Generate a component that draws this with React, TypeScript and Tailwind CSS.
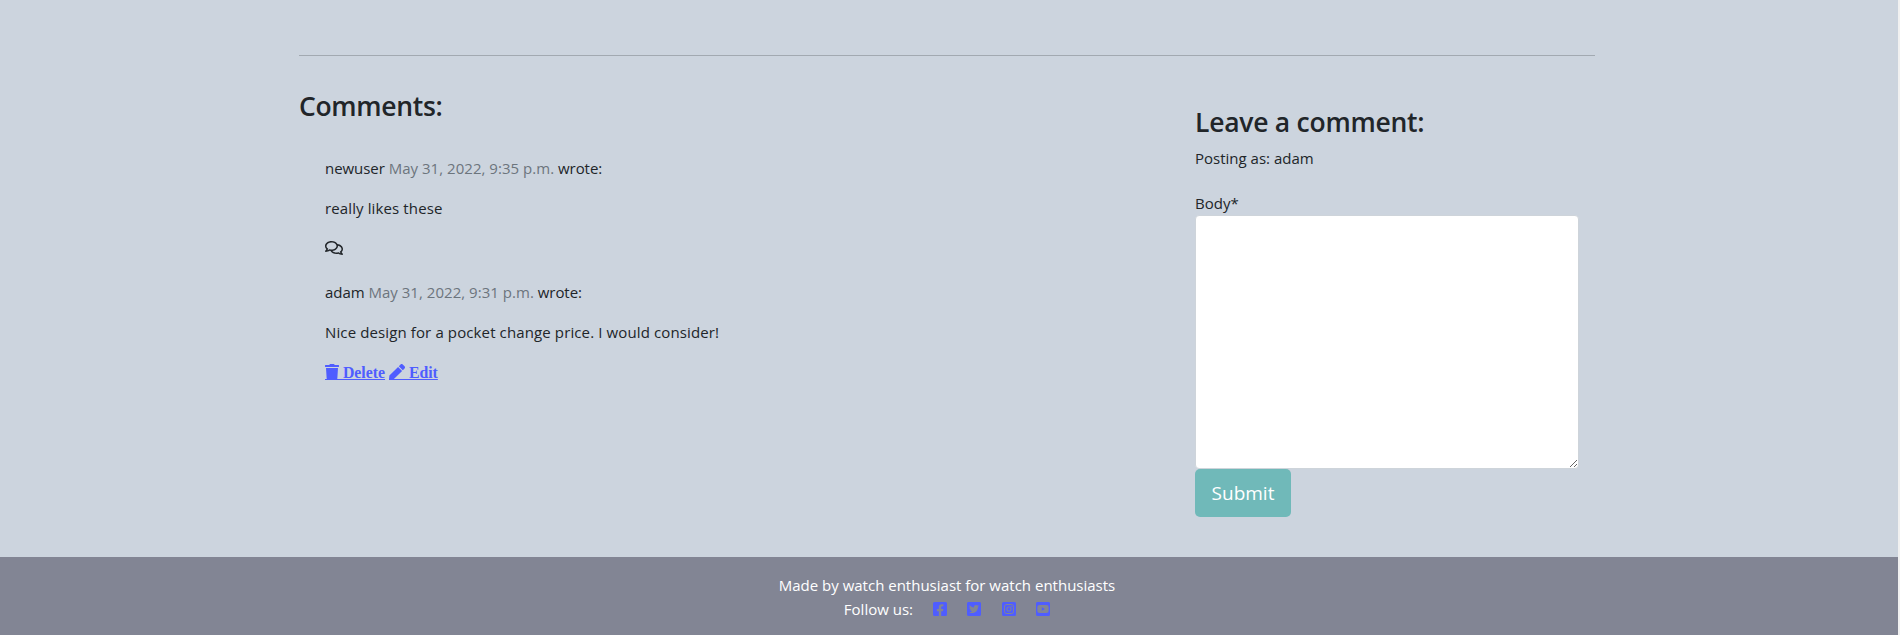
import type { ReactNode } from "react";
import {
  FaFacebookSquare,
  FaInstagramSquare,
  FaPen,
  FaRegComments,
  FaTrash,
  FaTwitterSquare,
  FaYoutubeSquare,
} from "react-icons/fa";

type CommentProps = {
  author: string;
  date: string;
  body: string;
  children: ReactNode;
};

function Comment({ author, date, body, children }: CommentProps) {
  return (
    <article>
      <p className="mb-4 tracking-[-0.05px]">
        {author} <span className="tracking-[0.03px] text-[#6c757d]">{date}</span> wrote:
      </p>
      <p className="mb-4 tracking-[0.12px]">{body}</p>
      {children}
    </article>
  );
}

const actionLink =
  "text-[#4f5dff] underline decoration-1 underline-offset-1 font-['Liberation_Serif',serif] font-bold text-[15.8px] leading-6 tracking-normal";

const actionIcon = "inline-block h-4 align-[-2px] shadow-[inset_0_-1px_0_#4f5dff]";

const socials = [
  { label: "Facebook", Icon: FaFacebookSquare },
  { label: "Twitter", Icon: FaTwitterSquare },
  { label: "Instagram", Icon: FaInstagramSquare },
  { label: "YouTube", Icon: FaYoutubeSquare },
];

export default function App() {
  return (
    <div className="flex h-[635px] bg-[#f1f1f1] font-['Open_Sans',sans-serif] text-[15px] leading-6 text-[#212529]">
      <div className="flex w-[1898px] flex-col bg-[#ccd4de]">
        <main className="ml-[299px] h-[557px] w-[1296px] pt-[55px]">
          <hr className="border-t border-[#a2a9b1]" />
          <div className="flex justify-between">
            <section className="pt-[33px]">
              <h3 className="text-[26.5px] font-semibold leading-[34px] tracking-[-0.3px]">
                Comments:
              </h3>
              <div className="flex flex-col gap-5 pl-[26px] pt-[33px]">
                <Comment author="newuser" date="May 31, 2022, 9:35 p.m." body="really likes these">
                  <div className="flex h-6 items-center">
                    <FaRegComments className="h-4 w-[18px]" />
                  </div>
                </Comment>
                <Comment
                  author="adam"
                  date="May 31, 2022, 9:31 p.m."
                  body="Nice design for a pocket change price. I would consider!"
                >
                  <div className="h-6">
                    <a className={actionLink}>
                      <FaTrash className={`${actionIcon} w-3.5`} /> Delete
                    </a>{" "}
                    <a className={actionLink}>
                      <FaPen className={`${actionIcon} w-4`} /> Edit
                    </a>
                  </div>
                </Comment>
              </div>
            </section>
            <form className="mr-4 w-[384px] pt-[49px]">
              <h3 className="mb-[7px] text-[26.5px] font-semibold leading-[34px] tracking-[-0.25px]">
                Leave a comment:
              </h3>
              <p className="mb-[21px]">Posting as: adam</p>
              <label className="block" htmlFor="body">
                Body*
              </label>
              <textarea
                id="body"
                className="block h-[254px] w-[384px] rounded-[4px] border border-[#ced4da] bg-white"
              />
              <button
                type="button"
                className="block h-12 w-24 rounded-[5px] bg-[#70b9b9] text-[19px] text-white"
              >
                Submit
              </button>
            </form>
          </div>
        </main>
        <footer className="flex flex-1 flex-col items-center bg-[#828594] pr-1 pt-4 text-white">
          <p>Made by watch enthusiast for watch enthusiasts</p>
          <div className="flex items-center">
            <span>Follow us:</span>
            <div className="ml-5 flex gap-[20.4px] text-[#4f5dff]">
              {socials.map(({ label, Icon }) => (
                <a key={label} aria-label={label}>
                  <Icon className="h-4 w-3.5" />
                </a>
              ))}
            </div>
          </div>
        </footer>
      </div>
    </div>
  );
}
